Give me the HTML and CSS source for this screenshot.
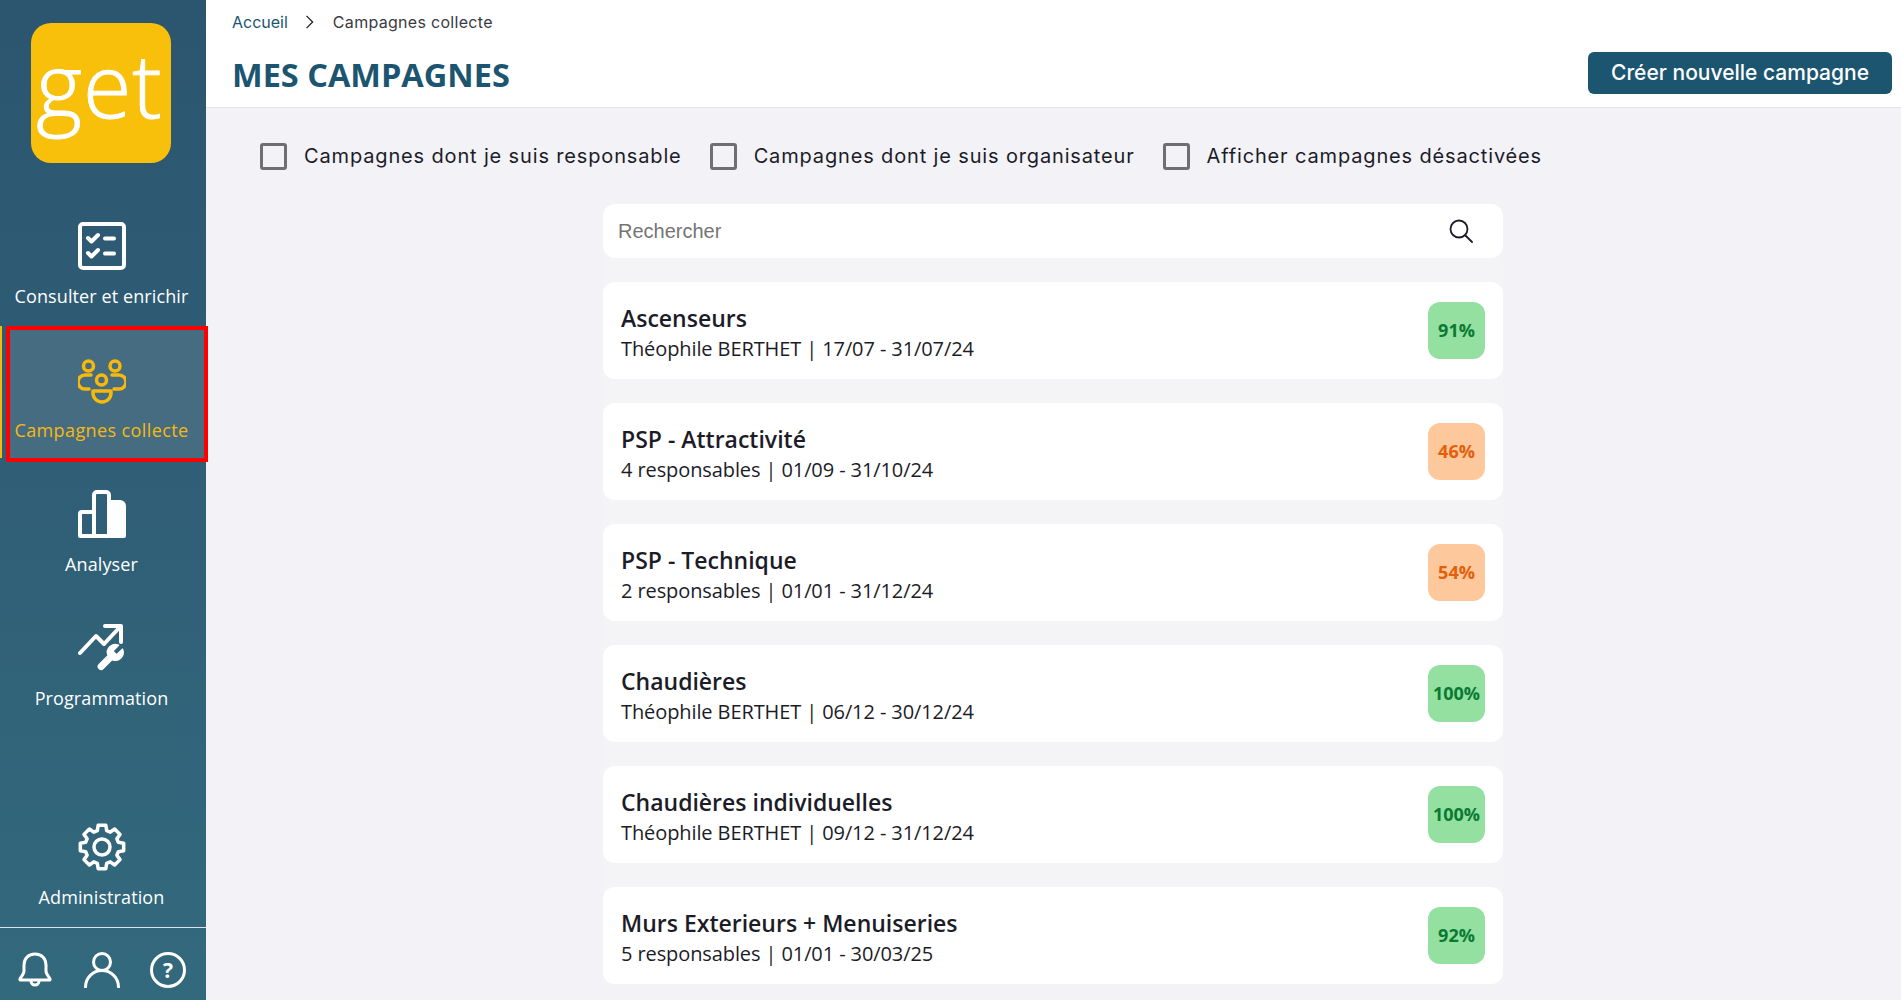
FILE: index.html
```html
<!DOCTYPE html>
<html lang="fr">
<head>
    <meta charset="UTF-8">
    <meta name="viewport" content="width=device-width, initial-scale=1.0">
    <title>Mes campagnes</title>
    <link rel="stylesheet" href="styles.css">
</head>
<body>
    <aside class="sidebar">
        <div class="logo"><span class="logo-text">get</span></div>
        <a class="nav-item">
            <svg class="nav-icon" viewBox="0 0 48 48" fill="none" stroke="currentColor" stroke-width="4" stroke-linecap="round" stroke-linejoin="round">
                <rect x="2" y="2" width="44" height="44" rx="3"/>
                <path d="M10 16l3.500 3.500L20 13M10 31l3.500 3.500L20 28"/>
                <path d="M27 16.500h9M27 31.500h9"/>
            </svg>
            <span>Consulter et enrichir</span>
        </a>
        <a class="nav-item active">
            <svg class="nav-icon" viewBox="0 0 48 48" fill="none" stroke="currentColor" stroke-width="3.500" stroke-linecap="round" stroke-linejoin="round">
                <circle cx="10.500" cy="8" r="5"/>
                <circle cx="37" cy="8" r="5"/>
                <circle cx="23.500" cy="22" r="5"/>
                <path d="M13 17H7a6.500 6.500 0 0 0 0 14h4"/>
                <path d="M34 17h7a6.500 6.500 0 0 1 0 14h-5"/>
                <path d="M15 33h18v2a9 9 0 0 1-18 0z"/>
            </svg>
            <span>Campagnes collecte</span>
        </a>
        <a class="nav-item">
            <svg class="nav-icon" viewBox="0 0 48 48" fill="none" stroke="currentColor" stroke-width="4" stroke-linejoin="round">
                <path d="M16 22H4a2 2 0 0 0-2 2v22h14z"/>
                <path d="M16 46V5a3 3 0 0 1 3-3h9a3 3 0 0 1 3 3v41z"/>
                <path fill="currentColor" stroke="none" d="M32 10h10a6 6 0 0 1 6 6v30a2 2 0 0 1-2 2H32z"/>
            </svg>
            <span>Analyser</span>
        </a>
        <a class="nav-item">
            <svg class="nav-icon" viewBox="0 0 48 48" fill="none" stroke="currentColor" stroke-width="4" stroke-linecap="round" stroke-linejoin="round">
                <path d="M2 29l16-17 8 8L41 4"/>
                <path d="M27 2h16v16"/>
                <path fill="currentColor" stroke="currentColor" stroke-width="1.200" transform="translate(16.500 18) scale(1.300)" d="M14.700 6.300a1 1 0 0 0 0 1.400l1.600 1.600a1 1 0 0 0 1.400 0l3.770-3.770a6 6 0 0 1-7.940 7.940l-6.910 6.910a2.120 2.120 0 0 1-3-3l6.910-6.910a6 6 0 0 1 7.940-7.940l-3.760 3.760z"/>
            </svg>
            <span>Programmation</span>
        </a>
        <a class="nav-item admin">
            <svg class="nav-icon" viewBox="0 0 48 48" fill="none" stroke="currentColor" stroke-width="3.500" stroke-linejoin="round">
                <path d="M20.180 2.330L27.820 2.330L28.690 7.660L32.240 9.130L36.620 5.980L42.020 11.380L38.870 15.760L40.340 19.310L45.670 20.180L45.670 27.820L40.340 28.690L38.870 32.240L42.020 36.620L36.620 42.020L32.240 38.870L28.690 40.340L27.820 45.670L20.180 45.670L19.310 40.340L15.760 38.870L11.380 42.020L5.980 36.620L9.130 32.240L7.660 28.690L2.330 27.820L2.330 20.180L7.660 19.310L9.130 15.760L5.980 11.380L11.380 5.980L15.760 9.130L19.310 7.660z"/>
                <circle cx="24" cy="24" r="8"/>
            </svg>
            <span>Administration</span>
        </a>
        <div class="sidebar-bottom">
            <svg class="bottom-icon" viewBox="0 0 36 36" fill="none" stroke="currentColor" stroke-width="3" stroke-linejoin="round">
                <path d="M18 2C11 2 7 7 7 13v6c0 3-3 6-4 8-.4.8 0 1 1 1h28c1 0 1.400-.2 1-1-1-2-4-5-4-8v-6c0-6-4-11-11-11z"/>
                <path d="M14 29a4 4 0 0 0 8 0"/>
            </svg>
            <svg class="bottom-icon" viewBox="0 0 36 36" fill="none" stroke="currentColor" stroke-width="3" stroke-linecap="round">
                <circle cx="18" cy="10" r="8.500"/>
                <path d="M1.500 35a16.500 16.500 0 0 1 33 0"/>
            </svg>
            <span class="help"><span>?</span></span>
        </div>
    </aside>

    <main class="main">
        <header class="page-header">
            <div class="breadcrumb">
                <a class="crumb-link">Accueil</a>
                <svg class="crumb-sep" viewBox="0 0 10 16" fill="none" stroke="currentColor" stroke-width="1.500"><path d="M1 1l7 7-7 7"/></svg>
                <span class="crumb-current">Campagnes collecte</span>
            </div>
            <div class="title-row">
                <h1>MES CAMPAGNES</h1>
                <button class="btn-new">Créer nouvelle campagne</button>
            </div>
        </header>

        <div class="filters">
            <label class="filter"><span class="box"></span>Campagnes dont je suis responsable</label>
            <label class="filter"><span class="box"></span>Campagnes dont je suis organisateur</label>
            <label class="filter"><span class="box"></span>Afficher campagnes désactivées</label>
        </div>

        <div class="content">
            <div class="search">
                <span class="search-text">Rechercher</span>
                <svg class="search-icon" viewBox="0 0 24 24" fill="none" stroke="currentColor" stroke-width="1.800" stroke-linecap="round">
                    <circle cx="10" cy="10" r="8.500"/>
                    <path d="M16.500 16.500l6.500 6.500"/>
                </svg>
            </div>
            <div class="list">
                <div class="card">
                    <div class="card-text"><div class="card-title">Ascenseurs</div><div class="card-sub">Théophile BERTHET | 17/07 - 31/07/24</div></div>
                    <span class="badge good">91%</span>
                </div>
                <div class="card">
                    <div class="card-text"><div class="card-title">PSP - Attractivité</div><div class="card-sub">4 responsables | 01/09 - 31/10/24</div></div>
                    <span class="badge mid">46%</span>
                </div>
                <div class="card">
                    <div class="card-text"><div class="card-title">PSP - Technique</div><div class="card-sub">2 responsables | 01/01 - 31/12/24</div></div>
                    <span class="badge mid">54%</span>
                </div>
                <div class="card">
                    <div class="card-text"><div class="card-title">Chaudières</div><div class="card-sub">Théophile BERTHET | 06/12 - 30/12/24</div></div>
                    <span class="badge good">100%</span>
                </div>
                <div class="card">
                    <div class="card-text"><div class="card-title">Chaudières individuelles</div><div class="card-sub">Théophile BERTHET | 09/12 - 31/12/24</div></div>
                    <span class="badge good">100%</span>
                </div>
                <div class="card">
                    <div class="card-text"><div class="card-title">Murs Exterieurs + Menuiseries</div><div class="card-sub">5 responsables | 01/01 - 30/03/25</div></div>
                    <span class="badge good">92%</span>
                </div>
            </div>
        </div>
    </main>
</body>
</html>
```

FILE: styles.css
```css
* {
    box-sizing: border-box;
}
body {
    margin: 0;
    height: 100vh;
    overflow: hidden;
    display: flex;
    background-color: #f2f2f7;
    font-family: 'Inter', 'Liberation Sans', sans-serif;
    color: #1c1c28;
}

/* sidebar */
.sidebar {
    width: 206px;
    flex-shrink: 0;
    display: flex;
    flex-direction: column;
    color: #fff;
    background: linear-gradient(180deg, #2c5570 0%, #33697d 100%);
    font-family: 'Open Sans', 'Noto Sans', sans-serif;
}
.logo {
    width: 140px;
    height: 140px;
    margin: 23px 0 29px 31px;
    flex-shrink: 0;
    background-color: #f8bf0b;
    border-radius: 20px;
    display: flex;
    justify-content: center;
    align-items: center;
}
.logo-text {
    font-size: 88px;
    font-weight: 300;
    line-height: 1;
    letter-spacing: 1px;
    color: #fff;
    margin: -18px 3px 0 0;
    -webkit-text-stroke: 1px #fff;
}
.nav-item {
    position: relative;
    height: 134px;
    padding: 30px 3px 0 0;
    flex-shrink: 0;
    display: flex;
    flex-direction: column;
    align-items: center;
    font-size: 18px;
    line-height: 24px;
    letter-spacing: .1px;
}
.nav-icon {
    width: 48px;
    height: 48px;
    margin-bottom: 14px;
}
.nav-item.active {
    color: #f9b90c;
    letter-spacing: .4px;
    background: linear-gradient(90deg, transparent 6px, #466c82 6px);
}
.nav-item.active .nav-icon {
    margin-top: 2px;
    margin-bottom: 12px;
}
/* yellow marker */
.nav-item.active::before {
    content: '';
    position: absolute;
    left: 0;
    top: 0;
    bottom: 2px;
    width: 2px;
    background-color: #f9b90c;
}
/* red annotation frame */
.nav-item.active::after {
    content: '';
    position: absolute;
    left: 6px;
    right: -2px;
    top: 0;
    bottom: -2px;
    border: 4px solid #ff0000;
    z-index: 2;
}
.nav-item.admin {
    margin-top: auto;
}
.sidebar-bottom {
    height: 73px;
    border-top: 1px solid #d8e4ea;
    padding: 24px 20px 0 17px;
    display: flex;
    justify-content: space-between;
    align-items: flex-start;
    flex-shrink: 0;
}
.bottom-icon {
    width: 36px;
    height: 36px;
}
.help {
    width: 36px;
    height: 36px;
    border: 3px solid #fff;
    border-radius: 50%;
    display: flex;
    justify-content: center;
    align-items: center;
    font-size: 21px;
    font-weight: 700;
}

/* main */
.main {
    flex: 1;
    min-width: 0;
    display: flex;
    flex-direction: column;
}
.page-header {
    height: 108px;
    flex-shrink: 0;
    background-color: #fff;
    border-bottom: 1px solid #e2e2e6;
    padding: 12px 9px 0 26px;
}
.breadcrumb {
    display: flex;
    align-items: center;
    font-size: 16px;
    line-height: 20px;
    color: #3a3a44;
}
.crumb-link {
    color: #1b5570;
}
.crumb-sep {
    width: 10px;
    height: 14px;
    margin: 0 18px 0 17px;
    color: #222;
}
.crumb-current {
    letter-spacing: .3px;
}
.title-row {
    display: flex;
    justify-content: space-between;
    align-items: flex-start;
    margin-top: 20px;
}
h1 {
    margin: 2px 0 0;
    font-family: 'Open Sans', 'Noto Sans', sans-serif;
    font-size: 32.500px;
    font-weight: 700;
    line-height: 42px;
    color: #1b5570;
}
.btn-new {
    width: 304px;
    height: 42px;
    border: none;
    border-radius: 6px;
    padding: 0 0 1px;
    background-color: #1b5570;
    color: #fff;
    font-family: inherit;
    font-size: 21px;
    font-weight: 500;
}
.filters {
    display: flex;
    gap: 28px;
    padding: 34px 0 0 54px;
    height: 96px;
    flex-shrink: 0;
}
.filter {
    display: flex;
    align-items: center;
    gap: 17px;
    height: 27px;
    font-size: 20px;
    letter-spacing: .85px;
}
.box {
    width: 27px;
    height: 27px;
    border: 3px solid #6e6e73;
    border-radius: 3px;
    margin-top: 2px;
}
.content {
    width: 900px;
    margin-left: 397px;
}
.search {
    height: 54px;
    background-color: #fff;
    border-radius: 12px;
    padding: 0 30px 0 15px;
    display: flex;
    justify-content: space-between;
    align-items: center;
}
.search-text {
    font-family: 'Liberation Sans', Arial, sans-serif;
    font-size: 20px;
    color: #757575;
}
.search-icon {
    width: 24px;
    height: 24px;
}
.list {
    display: flex;
    flex-direction: column;
    gap: 24px;
    padding-top: 24px;
    background-color: #f4f4f6;
}
.card {
    height: 97px;
    flex-shrink: 0;
    background-color: #fff;
    border-radius: 12px;
    padding: 0 18px;
    display: flex;
    justify-content: space-between;
    align-items: center;
    font-family: 'Open Sans', 'Noto Sans', sans-serif;
}
.card-text {
    padding-top: 5px;
}
.card-title {
    font-size: 23px;
    font-weight: 600;
    line-height: 30px;
}
.card-sub {
    margin-top: 1px;
    font-size: 20px;
    line-height: 30px;
    letter-spacing: -.1px;
}
.badge {
    width: 57px;
    height: 57px;
    border-radius: 12px;
    padding-bottom: 1px;
    display: flex;
    justify-content: center;
    align-items: center;
    font-size: 18px;
    font-weight: 700;
}
.good {
    background-color: #93e0a1;
    color: #0a7a33;
}
.mid {
    background-color: #fdc89b;
    color: #e2600c;
}
```
